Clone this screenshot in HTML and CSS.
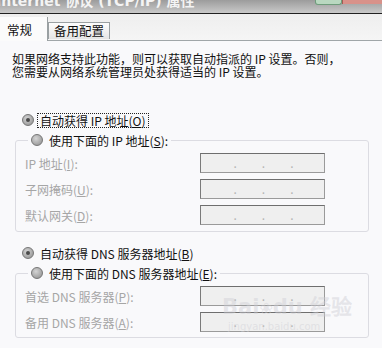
FILE: index.html
```html
<!DOCTYPE html>
<html lang="zh-CN">
<head>
    <meta charset="UTF-8">
    <title>Internet 协议 (TCP/IP) 属性</title>
    <link rel="stylesheet" href="styles.css">
</head>
<body>

    <div class="window">
        <!-- Title bar (cut off at top) -->
        <div class="titlebar">
            <span class="title">Internet 协议 (TCP/IP) 属性</span>
            <span class="btn-help"></span>
            <span class="btn-close"></span>
        </div>

        <!-- Tabs -->
        <div class="tabs">
            <div class="tab active">常规</div>
            <div class="tab">备用配置</div>
        </div>

        <div class="panel">
            <p class="intro">如果网络支持此功能，则可以获取自动指派的 IP 设置。否则，<br>您需要从网络系统管理员处获得适当的 IP 设置。</p>

            <div class="option first">
                <span class="radio checked"></span>
                <span class="focus">自动获得 IP 地址(<u>O</u>)</span>
            </div>

            <fieldset class="group">
                <legend class="option">
                    <span class="radio"></span>
                    <span>使用下面的 IP 地址(<u>S</u>):</span>
                </legend>
                <div class="row">
                    <span class="label">IP 地址(<u>I</u>):</span>
                    <span class="ipbox"><i>.</i><i>.</i><i>.</i></span>
                </div>
                <div class="row">
                    <span class="label">子网掩码(<u>U</u>):</span>
                    <span class="ipbox"><i>.</i><i>.</i><i>.</i></span>
                </div>
                <div class="row">
                    <span class="label">默认网关(<u>D</u>):</span>
                    <span class="ipbox"><i>.</i><i>.</i><i>.</i></span>
                </div>
            </fieldset>

            <div class="option dns">
                <span class="radio checked"></span>
                <span>自动获得 DNS 服务器地址(<u>B</u>)</span>
            </div>

            <fieldset class="group last">
                <legend class="option">
                    <span class="radio"></span>
                    <span>使用下面的 DNS 服务器地址(<u>E</u>):</span>
                </legend>
                <div class="row">
                    <span class="label">首选 DNS 服务器(<u>P</u>):</span>
                    <span class="ipbox"><i>.</i><i>.</i><i>.</i></span>
                </div>
                <div class="row">
                    <span class="label">备用 DNS 服务器(<u>A</u>):</span>
                    <span class="ipbox"><i>.</i><i>.</i><i>.</i></span>
                </div>
            </fieldset>
        </div>

        <!-- watermark -->
        <div class="watermark">
            <div class="wm-logo">Bai<span class="paw">❀</span>du 经验</div>
            <div class="wm-url">jingyan.baidu.com</div>
        </div>
    </div>

</body>
</html>
```

FILE: styles.css
```css
/* General */
body {
    margin: 0;
    padding: 0;
    background-color: #f9f9fb;
    font-family: "Noto Sans CJK SC", "DejaVu Sans", sans-serif;
    font-size: 12px;
    color: #111;
}

.window {
    position: relative;
    width: 382px;
    height: 348px;
    overflow: hidden;
}

/* Title bar */
.titlebar {
    display: flex;
    height: 13px;
    overflow: hidden;
    background: linear-gradient(#9c9c9c, #c9c9c9);
    border-bottom: 1px solid #202020;
}

.titlebar .title {
    margin-top: -8px;
    margin-left: -4px;
    font-family: "DejaVu Sans", "Noto Sans CJK SC", sans-serif;
    font-size: 14px;
    font-weight: bold;
    line-height: 18px;
    color: #f4f4f4;
    white-space: nowrap;
}

.btn-help {
    margin-left: auto;
    width: 25px;
    height: 4px;
    background: #b9d8c0;
    border: 1px solid #6f9c7c;
    border-top: none;
    border-radius: 0 0 3px 3px;
}

.btn-close {
    width: 39px;
    height: 4px;
    background: #d8928a;
    border-left: 1px solid #a35a52;
}

/* Tabs */
.tabs {
    display: flex;
    align-items: flex-end;
    height: 26px;
    background: linear-gradient(#eeeeee, #f5f5f5);
    border-bottom: 1px solid #a0a6a8;
}

.tab {
    height: 16px;
    padding: 0 5px;
    line-height: 16px;
    font-size: 12.5px;
    background: linear-gradient(#fdfdfd, #e4e4e4);
    border: 1px solid #9aa0a2;
    border-bottom: none;
    margin-bottom: 1px;
}

.tab.active {
    height: 24px;
    width: 40px;
    padding: 0 0 0 7px;
    line-height: 25px;
    background: #fbfbfb;
    border-left: none;
    border-top: none;
    margin-bottom: -1px;
}

/* Panel */
.intro {
    margin: 11px 0 0 12px;
    line-height: 13px;
    white-space: nowrap;
}

.option {
    display: flex;
    align-items: center;
    height: 20px;
    white-space: nowrap;
}

.option.first {
    margin-top: 32px;
    padding-left: 22px;
}

.option.dns {
    margin-top: 11px;
    padding-left: 22px;
}

.radio {
    width: 10px;
    height: 10px;
    margin-right: 6px;
    border: 1px solid #767676;
    border-radius: 50%;
    background: radial-gradient(circle at 40% 35%, #d4d4d4, #8c8c8c);
    display: flex;
    align-items: center;
    justify-content: center;
}

.radio.checked::after {
    content: "";
    width: 4px;
    height: 4px;
    border-radius: 50%;
    background: #4a4a4a;
}

.focus {
    margin-left: -3px;
    padding: 0 2px;
    line-height: 13px;
    border: 1px dotted #222;
}

u {
    text-decoration: underline;
}

/* Group boxes */
.group {
    margin: 0 13px 0 15px;
    padding: 0 0 6px 9px;
    border: 1px solid #dcdce2;
    border-radius: 3px;
}

.group.last {
    padding-bottom: 5px;
}

.group legend.option {
    margin-left: 3px;
    padding: 0 3px;
}

.row {
    display: flex;
    align-items: center;
    height: 20px;
    margin-top: 6px;
}

.row:first-of-type {
    margin-top: 3px;
}

.label {
    width: 175px;
    color: #a6a6a6;
    white-space: nowrap;
}

.ipbox {
    display: flex;
    justify-content: space-around;
    align-items: center;
    box-sizing: border-box;
    width: 125px;
    height: 20px;
    padding: 0 18px 0 20px;
    background: #efefef;
    border: 1px solid #9a9a9a;
    border-top-color: #6e6e6e;
    border-left-color: #7a7a7a;
}

.ipbox i {
    font-style: normal;
    color: #b4b4b4;
    line-height: 10px;
}

/* Watermark */
.watermark {
    position: absolute;
    left: 222px;
    top: 296px;
    color: rgba(205, 205, 212, 0.45);
    pointer-events: none;
}

.wm-logo {
    font-family: "DejaVu Sans", sans-serif;
    font-size: 21px;
    font-weight: bold;
    line-height: 22px;
    white-space: nowrap;
}

.wm-logo .paw {
    font-size: 16px;
}

.wm-url {
    margin-left: 6px;
    font-family: "DejaVu Sans", sans-serif;
    font-size: 10px;
    line-height: 14px;
}
```
